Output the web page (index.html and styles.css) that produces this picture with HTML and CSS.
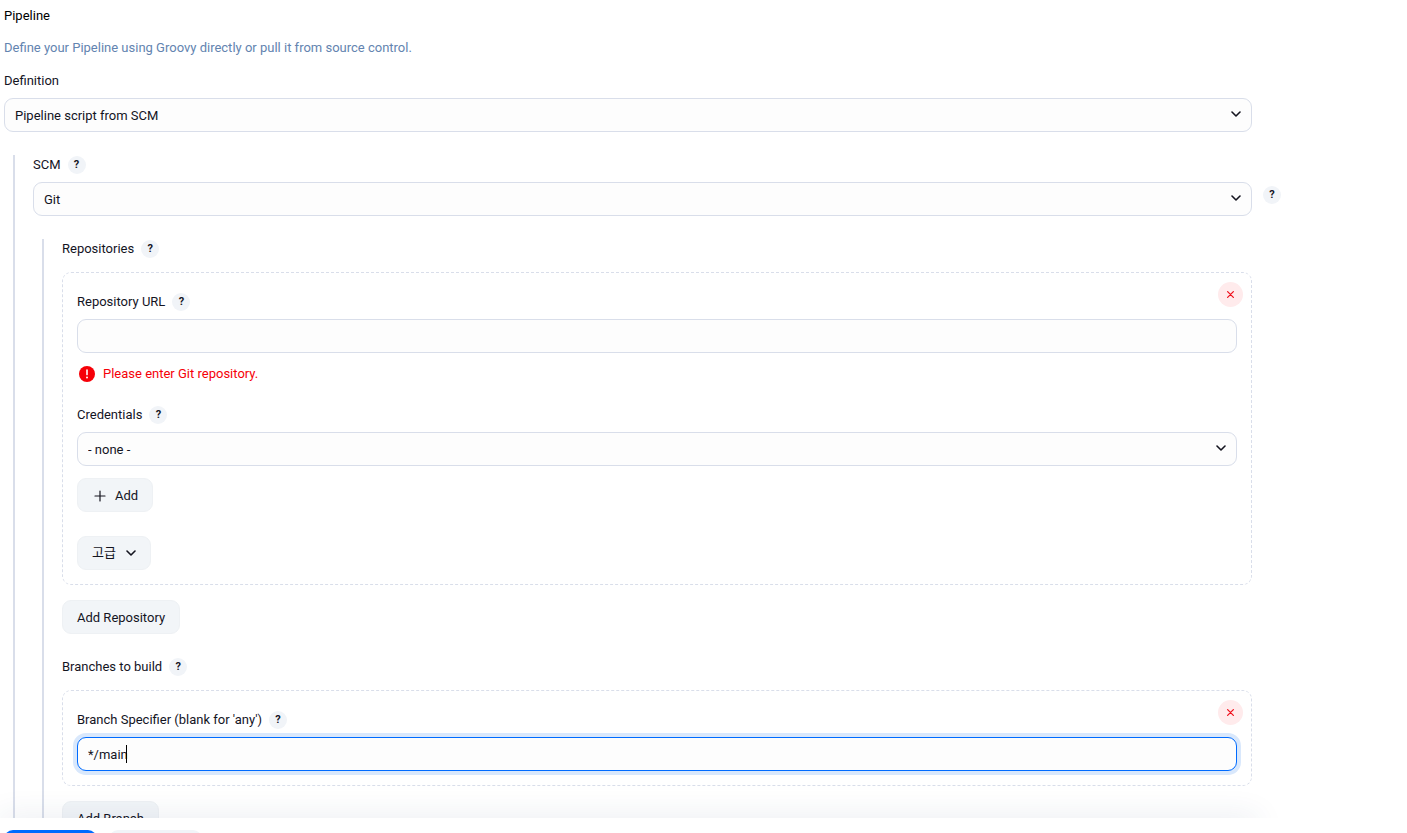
FILE: index.html
```html
<!DOCTYPE html>
<html lang="en">
<head>
<meta charset="utf-8">
<meta name="viewport" content="width=device-width, initial-scale=1">
<title>Pipeline</title>
<link rel="stylesheet" href="styles.css">
</head>
<body>
<svg width="0" height="0" class="sprite" aria-hidden="true">
  <symbol id="chevron" viewBox="0 0 10 10"><path d="M1 3l4 4 4-4" fill="none" stroke="currentColor" stroke-width="1.6" stroke-linecap="round" stroke-linejoin="round"/></symbol>
  <symbol id="cross" viewBox="0 0 10 10"><path d="M1.8 1.8l6.4 6.4M8.2 1.8L1.8 8.2" fill="none" stroke="currentColor" stroke-width="1.4" stroke-linecap="round"/></symbol>
  <symbol id="plus" viewBox="0 0 12 12"><path d="M6 1v10M1 6h10" fill="none" stroke="currentColor" stroke-width="1.2" stroke-linecap="round"/></symbol>
</svg>
<main class="config">
  <h2 class="title">Pipeline</h2>
  <p class="description">Define your Pipeline using Groovy directly or pull it from source control.</p>
  <div class="field">
    <div class="label-row"><label for="definition">Definition</label></div>
    <div class="select">
      <select id="definition"><option>Pipeline script from SCM</option></select>
      <svg class="chevron"><use href="#chevron"/></svg>
    </div>
  </div>
  <section class="nested">
    <div class="field">
      <div class="label-row"><label for="scm">SCM</label><button type="button" class="help" aria-label="Help for SCM">?</button></div>
      <div class="select">
        <select id="scm"><option>Git</option></select>
        <svg class="chevron"><use href="#chevron"/></svg>
        <button type="button" class="help help-outside" aria-label="Help for Git">?</button>
      </div>
    </div>
    <section class="nested">
      <div class="label-row label-group"><span>Repositories</span><button type="button" class="help" aria-label="Help for Repositories">?</button></div>
      <div class="card">
        <button type="button" class="remove" aria-label="Remove repository"><svg><use href="#cross"/></svg></button>
        <div class="field">
          <div class="label-row"><label for="url">Repository URL</label><button type="button" class="help" aria-label="Help for Repository URL">?</button></div>
          <input id="url" class="input" type="text">
          <p class="error">
            <svg viewBox="0 0 16 16"><circle cx="8" cy="8" r="8" fill="#f60008"/><path d="M8 4v4.6" stroke="#fff" stroke-width="1.6" stroke-linecap="round"/><circle cx="8" cy="11.6" r="1" fill="#fff"/></svg>
            Please enter Git repository.
          </p>
        </div>
        <div class="field">
          <div class="label-row"><label for="credentials">Credentials</label><button type="button" class="help" aria-label="Help for Credentials">?</button></div>
          <div class="select">
            <select id="credentials"><option>- none -</option></select>
            <svg class="chevron"><use href="#chevron"/></svg>
          </div>
          <button type="button" class="button button-add"><svg class="plus"><use href="#plus"/></svg>Add</button>
        </div>
        <button type="button" class="button button-advanced" lang="ko">고급<svg><use href="#chevron"/></svg></button>
      </div>
      <button type="button" class="button">Add Repository</button>
      <div class="label-row label-group label-branches"><span>Branches to build</span><button type="button" class="help" aria-label="Help for Branches to build">?</button></div>
      <div class="card">
        <button type="button" class="remove" aria-label="Remove branch"><svg><use href="#cross"/></svg></button>
        <div class="field">
          <div class="label-row"><label for="branch">Branch Specifier (blank for 'any')</label><button type="button" class="help" aria-label="Help for Branch Specifier">?</button></div>
          <div class="editing">
            <input id="branch" class="input input-active" type="text" value="*/main">
            <span class="caret"></span>
          </div>
        </div>
      </div>
      <button type="button" class="button">Add Branch</button>
    </section>
  </section>
</main>
<footer class="actions">
  <button type="button" class="action action-save" aria-label="Save"></button>
  <button type="button" class="action" aria-label="Apply"></button>
</footer>
</body>
</html>
```
FILE: styles.css
```css
* { box-sizing: border-box; }

body {
  margin: 0;
  height: 100vh;
  display: flex;
  flex-direction: column;
  overflow: hidden;
  background: #fff;
  color: #14141f;
  font-family: Roboto, "Noto Sans CJK KR", sans-serif;
  font-size: 13px;
  line-height: 18px;
}

button, input, select { font: inherit; color: inherit; }
h2, p { margin: 0; }
.sprite { position: absolute; }

.config {
  flex: 1;
  min-height: 0;
  overflow: hidden;
  padding: 7px 155px 0 4px;
}

.title { font-size: 13px; font-weight: 400; color: #000; }
.description { margin: 14px 0 15px; color: #6384b0; }

.label-row { display: flex; align-items: center; gap: 7px; height: 18px; margin-bottom: 8px; }
.label-group { margin-bottom: 14px; }
.label-branches { margin-top: 24px; }

.help {
  width: 18px;
  height: 18px;
  padding: 0;
  border: 0;
  border-radius: 50%;
  background: #f1f4f8;
  font-size: 11px;
  font-weight: 700;
  line-height: 18px;
  text-align: center;
}
.help-outside { position: absolute; left: calc(100% + 11px); top: 4px; }

.select { position: relative; }
.select select, .input {
  display: block;
  width: 100%;
  height: 34px;
  padding: 0 10px;
  appearance: none;
  border: 1px solid #d9deea;
  border-radius: 9px;
  background: #fdfdfd;
  outline: 0;
}
.select select { padding-top: 2px; }
.chevron { position: absolute; right: 11px; top: 11px; width: 10px; height: 10px; pointer-events: none; }

.nested {
  margin: 23px 0 0 9px;
  padding: 1px 0 0 18px;
  border-left: 2px solid #d9deea;
}

.card {
  position: relative;
  margin-bottom: 15px;
  padding: 20px 14px 14px;
  border: 1px dashed #d9deea;
  border-radius: 9px;
}

.remove {
  position: absolute;
  top: 9px;
  right: 8px;
  display: grid;
  place-items: center;
  width: 25px;
  height: 25px;
  padding: 0;
  border: 0;
  border-radius: 50%;
  background: #ffebec;
  color: #f0101c;
}
.remove svg { width: 9px; height: 9px; }

.error { display: flex; align-items: center; gap: 8px; margin: 12px 0 23px; padding-left: 2px; color: #f60008; }
.error svg { width: 16px; height: 16px; }

.button {
  display: flex;
  align-items: center;
  height: 34px;
  padding: 1px 14px 0;
  border: 1px solid #eef1f4;
  border-radius: 9px;
  background: #f2f5f8;
}
.button svg { width: 10px; height: 10px; }
.button-add { gap: 9px; margin: 12px 0 24px; padding-left: 16px; }
.button-add .plus { width: 12px; height: 12px; }
.button-advanced { gap: 10px; padding-top: 0; }

.editing { position: relative; }
.input-active { border-color: #006bff; box-shadow: 0 0 0 4px #d9e8fc; }
.caret { position: absolute; left: 49px; top: 8px; width: 1px; height: 18px; background: #000; }

.actions {
  position: relative;
  display: flex;
  gap: 12px;
  height: 15px;
  padding: 12px 4px 0;
  background: #fff;
}
.actions::before {
  content: "";
  position: absolute;
  inset: 0 150px 0 0;
  box-shadow: 0 0 30px rgba(40, 60, 110, 0.13);
  clip-path: inset(-40px -40px 100% -40px);
}
.action { flex: none; width: 93px; height: 34px; border: 0; border-radius: 9px; background: #f1f4f8; }
.action-save { background: #006bff; }
```
